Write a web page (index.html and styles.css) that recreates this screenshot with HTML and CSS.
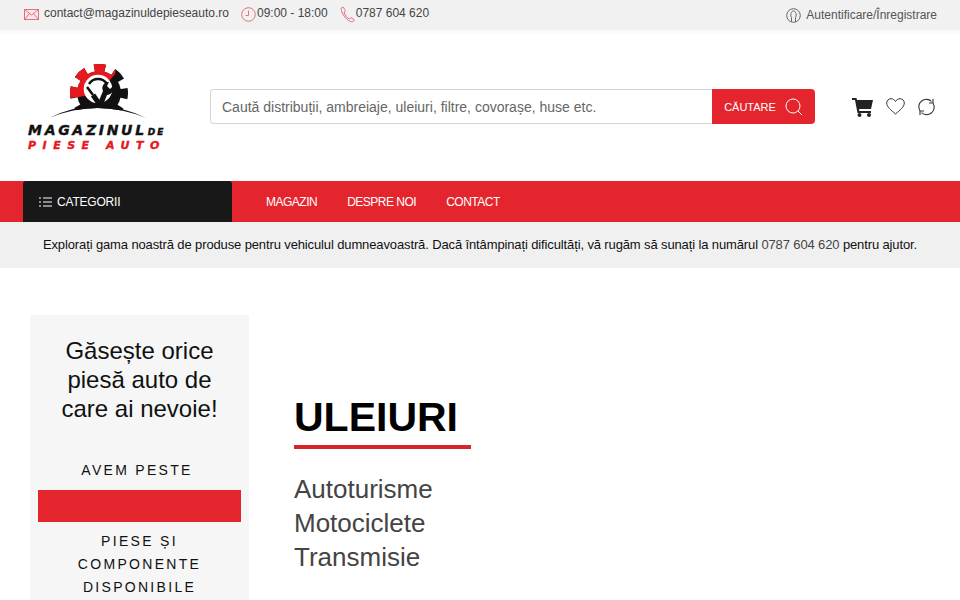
FILE: index.html
```html
<!DOCTYPE html>
<html lang="ro">
<head>
  <meta charset="UTF-8" />
  <meta name="viewport" content="width=device-width, initial-scale=1" />
  <title>Magazinul de piese auto - Uleiuri</title>
  <link rel="stylesheet" href="styles.css">
</head>
<body>
  <div class="topbar">
    <div class="top-left">
      <span class="top-item">
        <svg class="top-icon" width="15" height="11" viewBox="0 0 15 11" fill="#fbe6ea" stroke="#e2707f" stroke-width="1"><rect x="0.5" y="0.5" width="14" height="10"/><path d="M0.5 0.5 7.5 6 14.5 0.5M0.5 10.5 5.5 4.5M14.5 10.5 9.5 4.5" fill="none"/></svg>
        contact@magazinuldepieseauto.ro
      </span>
      <span class="top-item tight">
        <svg class="top-icon" width="15" height="15" viewBox="0 0 15 15" fill="none" stroke="#e2707f" stroke-width="1"><circle cx="7.5" cy="7.5" r="6.8"/><path d="M7.5 3.5V8.5H4.5"/></svg>
        09:00 - 18:00
      </span>
      <span class="top-item tight">
        <svg class="top-icon" width="15" height="17" viewBox="0 0 15 17" fill="none" stroke="#e2707f" stroke-width="1"><path d="M1 2.5 3 1 5.5 4.5 4 6C4.5 8.5 7 12 9.5 13L11 11.5 14.3 14 12.5 16C7 15.5 1.5 8 1 2.5Z"/></svg>
        0787 604 620
      </span>
    </div>
    <a class="top-login" href="#">
      <svg width="15" height="15" viewBox="0 0 15 15" fill="none" stroke="#666" stroke-width="1"><circle cx="7.5" cy="7.5" r="6.8"/><path d="M5.5 13.5V9.5C4.3 8 4.5 3 7.5 3S10.7 8 9.5 9.5V13.5"/></svg>
      Autentificare/Înregistrare
    </a>
  </div>

  <header class="header">
    <a class="logo" href="#">
      <svg class="logo-mark" width="97" height="56" viewBox="0 0 97 56">
        <defs>
          <clipPath id="gear-red"><polygon points="0,0 68,0 66,10 50,29 36,32 0,37"/></clipPath>
        </defs>
        <circle cx="50" cy="29" r="22" fill="#111"/>
        <circle cx="50" cy="29" r="25" fill="none" stroke="#111" stroke-width="8" stroke-dasharray="11 8.63" stroke-dashoffset="5.5"/>
        <g clip-path="url(#gear-red)">
          <circle cx="50" cy="29" r="22" fill="#e8181f"/>
          <circle cx="50" cy="29" r="25" fill="none" stroke="#e8181f" stroke-width="8" stroke-dasharray="11 8.63" stroke-dashoffset="5.5"/>
        </g>
        <circle cx="49" cy="25" r="14.3" fill="#fff"/>
        <path d="M40 20A10.5 10.5 0 0 1 58 20" fill="none" stroke="#111" stroke-width="2.5"/>
        <path d="M38 23 44 31" stroke="#111" stroke-width="2.5"/>
        <path d="M44 31 51 41" stroke="#111" stroke-width="5"/>
        <path d="M49 39 54 27C52 22 55 18 60 18L58 22 61 25 64 22C65 27 62 31 58 31L54 41Z" fill="#111"/>
        <path d="M0 54Q48.5 34 97 54V56H0Z" fill="#fff"/>
        <path d="M0 54Q48.5 30 97 54Q48.5 34 0 54Z" fill="#111"/>
      </svg>
      <span class="logo-line1">MAGAZINUL<small>DE</small></span>
      <span class="logo-line2">PIESE AUTO</span>
    </a>
    <form class="search">
      <input type="text" placeholder="Caută distribuții, ambreiaje, uleiuri, filtre, covorașe, huse etc." />
      <button type="button">
        CĂUTARE
        <svg width="18" height="18" viewBox="0 0 18 18" fill="none" stroke="#fff" stroke-width="1"><circle cx="8" cy="8" r="7"/><path d="M13 13 17 17"/></svg>
      </button>
    </form>
    <div class="header-icons">
      <svg width="22" height="20" viewBox="0 0 22 20" fill="#222"><path d="M0 1H4.5L5 3H21L19 12H7L7.3 14H19V16H5.5L3 3H0Z"/><circle cx="7.5" cy="18" r="2"/><circle cx="17" cy="18" r="2"/></svg>
      <svg width="19" height="17" viewBox="0 0 19 17" fill="none" stroke="#333" stroke-width="1"><path d="M9.5 16C5 12 0.7 9 0.7 5 0.7 2.5 2.7 0.7 5 0.7 7 0.7 8.7 2 9.5 3.5 10.3 2 12 0.7 14 0.7 16.3 0.7 18.3 2.5 18.3 5 18.3 9 14 12 9.5 16Z"/></svg>
      <svg width="19" height="18" viewBox="0 0 19 18" fill="none" stroke="#333" stroke-width="1.1"><path d="M2.9 12.7A7.5 7.5 0 0 1 14.5 3.4"/><path d="M16.1 5.3A7.5 7.5 0 0 1 4.5 14.6"/><path d="M16 1V5H12M3 17V13H7"/></svg>
    </div>
  </header>

  <nav class="nav">
    <div class="cat-btn">
      <svg width="13" height="10" viewBox="0 0 13 10" fill="none" stroke="#fff" stroke-width="1"><path d="M4 1H13M4 5H13M4 9H13M0 1H2M0 5H2M0 9H2"/></svg>
      CATEGORII
    </div>
    <ul class="nav-links">
      <li><a href="#">MAGAZIN</a></li>
      <li><a href="#">DESPRE NOI</a></li>
      <li><a href="#">CONTACT</a></li>
    </ul>
  </nav>

  <div class="notice">
    <p>Explorați gama noastră de produse pentru vehiculul dumneavoastră. Dacă întâmpinați dificultăți, vă rugăm să sunați la numărul <span>0787 604 620</span> pentru ajutor.</p>
  </div>

  <main class="main">
    <aside class="promo">
      <h3>Găsește orice piesă auto de care ai nevoie!</h3>
      <p class="promo-small promo-top">AVEM PESTE</p>
      <div class="promo-bar"></div>
      <p class="promo-small promo-bottom">PIESE ȘI COMPONENTE DISPONIBILE</p>
    </aside>
    <section class="content">
      <h1>ULEIURI</h1>
      <ul class="cat-list">
        <li><a href="#">Autoturisme</a></li>
        <li><a href="#">Motociclete</a></li>
        <li><a href="#">Transmisie</a></li>
      </ul>
    </section>
  </main>
</body>
</html>
```

FILE: styles.css
```css
html, body {
  height: 600px;
  overflow: hidden;
}
body {
  margin: 0;
  font-family: "Liberation Sans", Arial, sans-serif;
  background: white;
  color: #333;
}
a {
  color: inherit;
  text-decoration: none;
}
ul {
  list-style: none;
  margin: 0;
  padding: 0;
}

.topbar {
  height: 30px;
  padding: 0 23px 0 24px;
  display: flex;
  align-items: center;
  justify-content: space-between;
  background: #f1f1f1;
  box-shadow: 0 2px 4px rgba(0, 0, 0, 0.04);
  font-size: 12px;
  color: #444;
}
.top-left {
  padding-bottom: 4px;
  display: flex;
  align-items: center;
  gap: 12px;
}
.top-item {
  display: flex;
  align-items: center;
  gap: 5px;
}
.top-item.tight {
  gap: 1px;
}
.top-icon {
  margin-top: 2px;
}
.top-login {
  display: flex;
  align-items: center;
  gap: 5px;
  color: #555;
}

.header {
  height: 151px;
  padding-left: 28px;
  display: flex;
  align-items: center;
}
.logo {
  width: 182px;
  display: flex;
  flex-direction: column;
  align-items: flex-start;
  font-family: "DejaVu Sans", sans-serif;
  font-style: italic;
  font-weight: bold;
  margin-top: 3px;
}
.logo-mark {
  margin-left: 21px;
}
.logo-line1 {
  margin-top: 3px;
  font-size: 14px;
  line-height: 14px;
  letter-spacing: 2.7px;
  color: #111;
  white-space: nowrap;
  -webkit-text-stroke: 0.4px #111;
}
.logo-line1 small {
  font-size: 9px;
  letter-spacing: 2px;
  margin-left: 1px;
}
.logo-line2 {
  margin-top: 1px;
  font-size: 11px;
  line-height: 11px;
  letter-spacing: 6.5px;
  color: #e8181f;
  white-space: nowrap;
  -webkit-text-stroke: 0.4px #e8181f;
}

.search {
  width: 605px;
  height: 35px;
  margin-top: 2px;
  display: flex;
}
.search input {
  flex: 1;
  min-width: 0;
  box-sizing: border-box;
  padding: 0 11px;
  border: 1px solid #d5d5d5;
  border-right: none;
  border-radius: 4px 0 0 4px;
  font-family: inherit;
  font-size: 14px;
  outline: none;
}
.search input::placeholder {
  color: #666;
  opacity: 1;
}
.search button {
  width: 103px;
  display: flex;
  align-items: center;
  justify-content: center;
  gap: 9px;
  background: #e5252d;
  color: white;
  border: none;
  border-radius: 0 4px 4px 0;
  font-family: inherit;
  font-size: 11px;
  padding: 0;
}

.header-icons {
  margin-left: 37px;
  margin-top: 2px;
  display: flex;
  align-items: center;
  gap: 12px;
}

.nav {
  height: 41px;
  padding-left: 23px;
  display: flex;
  background: #e5252d;
  color: white;
  font-size: 12px;
  letter-spacing: -0.5px;
}
.cat-btn {
  width: 209px;
  box-sizing: border-box;
  padding-left: 16px;
  display: flex;
  align-items: center;
  gap: 5px;
  background: #181818;
  border-radius: 3px 3px 0 0;
  letter-spacing: -0.2px;
}
.nav-links {
  margin-left: 34px;
  display: flex;
  align-items: center;
  gap: 30px;
}

.notice {
  height: 44px;
  padding-bottom: 2px;
  display: flex;
  align-items: center;
  justify-content: center;
  background: #f0f0f0;
  font-size: 13px;
  letter-spacing: -0.125px;
  color: #111;
  white-space: nowrap;
}
.notice p {
  margin: 0;
}
.notice span {
  color: #444;
}

.main {
  padding: 47px 0 0 30px;
  display: flex;
  gap: 45px;
}
.promo {
  width: 219px;
  height: 300px;
  flex-shrink: 0;
  box-sizing: border-box;
  padding: 21px 8px 0;
  background: #f6f6f6;
  text-align: center;
  color: #111;
}
.promo h3 {
  margin: 0;
  padding: 0 14px;
  font-weight: normal;
  font-size: 24px;
  line-height: 29px;
}
.promo-small {
  margin: 0;
  font-size: 14px;
  line-height: 23px;
  letter-spacing: 2.3px;
}
.promo-top {
  margin-top: 36px;
  padding-right: 5px;
}
.promo-bar {
  height: 32px;
  margin: 8px 0;
  background: #e5252d;
}
.promo-bottom {
  padding: 0 20px;
}

.content {
  padding-top: 78px;
}
.content h1 {
  display: inline-block;
  margin: 0;
  padding-bottom: 4px;
  padding-right: 13px;
  border-bottom: 4px solid #d9232d;
  font-size: 41px;
  line-height: 48px;
  color: #000;
}
.cat-list {
  margin-top: 23px;
  font-size: 26px;
  line-height: 34px;
  color: #444;
}
```
